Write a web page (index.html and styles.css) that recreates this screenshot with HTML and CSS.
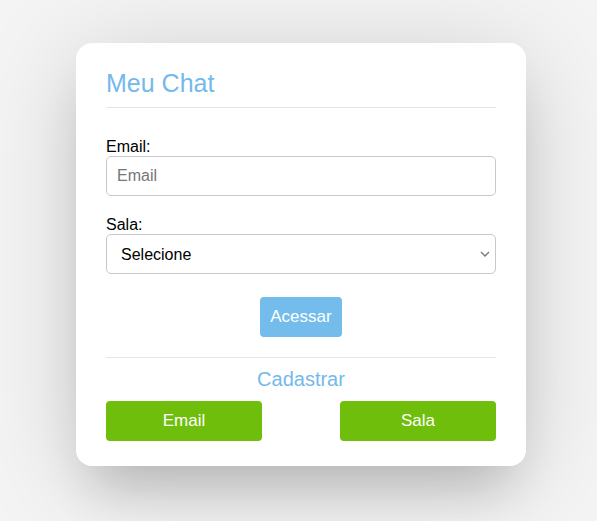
FILE: index.html
```html
<!DOCTYPE html>
<html lang="pt">
<head>
<meta charset="utf-8">
<title>Meu Chat</title>
<link rel="stylesheet" href="styles.css">
</head>
<body>
<div class="page">
  <div class="card">
    <h1 class="title">Meu Chat</h1>
    <form class="form">
      <label class="label" for="email">Email:</label>
      <input class="field" id="email" type="text" placeholder="Email">
      <label class="label label-gap" for="sala">Sala:</label>
      <div class="select-wrap">
        <select class="field select" id="sala">
          <option>Selecione</option>
        </select>
        <svg class="chevron" width="10" height="6" viewBox="0 0 10 6" aria-hidden="true">
          <path d="M1 1 L5 5 L9 1" fill="none" stroke="#777" stroke-width="1.4"/>
        </svg>
      </div>
      <div class="center">
        <button type="button" class="btn btn-blue">Acessar</button>
      </div>
    </form>
    <hr class="divider">
    <div class="subtitle">Cadastrar</div>
    <div class="actions">
      <button type="button" class="btn btn-green">Email</button>
      <button type="button" class="btn btn-green">Sala</button>
    </div>
  </div>
</div>
</body>
</html>
```

FILE: styles.css
```css
* { box-sizing: border-box; }
html, body {
  margin: 0;
  padding: 0;
  background: #f4f4f4;
  font-family: "Liberation Sans", Arial, sans-serif;
  height: 100%;
}
.page {
  padding: 43px 0 0 5px;
  display: flex;
  justify-content: center;
}
.card {
  width: 450px;
  background: #ffffff;
  border-radius: 16px;
  padding: 25px 30px 25px 30px;
  box-shadow: 0 15px 100px rgba(0, 0, 0, 0.17), 0 35px 50px -15px rgba(0, 0, 0, 0.16);
}
.title {
  margin: 0;
  font-size: 25px;
  line-height: 30px;
  font-weight: normal;
  color: #74b9ec;
  padding-bottom: 9px;
  border-bottom: 1px solid #e5e5e5;
}
.form {
  margin-top: 30px;
  display: flex;
  flex-direction: column;
}
.label {
  display: block;
  font-size: 16px;
  line-height: 18px;
  color: #000;
}
.label-gap { margin-top: 20px; }
.field {
  width: 100%;
  height: 40px;
  border: 1px solid #c8c8c8;
  border-radius: 5px;
  padding: 0 10px;
  font-family: "Liberation Sans", Arial, sans-serif;
  font-size: 16px;
  color: #000;
  background: #fff;
  outline: none;
}
.field::placeholder { color: #777; }
.select-wrap {
  position: relative;
}
.select {
  appearance: none;
  -webkit-appearance: none;
  padding: 0 24px 0 14px;
}
.chevron {
  position: absolute;
  right: 6px;
  top: 17px;
  pointer-events: none;
}
.center {
  display: flex;
  justify-content: center;
  margin-top: 23px;
}
.btn {
  height: 40px;
  border: none;
  border-radius: 4px;
  color: #fff;
  font-family: "Liberation Sans", Arial, sans-serif;
  font-size: 17px;
  cursor: pointer;
}
.btn-blue {
  width: 82px;
  background: #73bcec;
  padding: 0;
}
.divider {
  margin: 20px 0 0 0;
  border: none;
  border-top: 1px solid #e5e5e5;
  height: 0;
}
.subtitle {
  margin-top: 9px;
  text-align: center;
  font-size: 20px;
  line-height: 24px;
  color: #74b9ec;
}
.actions {
  margin-top: 10px;
  display: flex;
  justify-content: space-between;
}
.btn-green {
  width: 156px;
  background: #6fbe0b;
}
```
